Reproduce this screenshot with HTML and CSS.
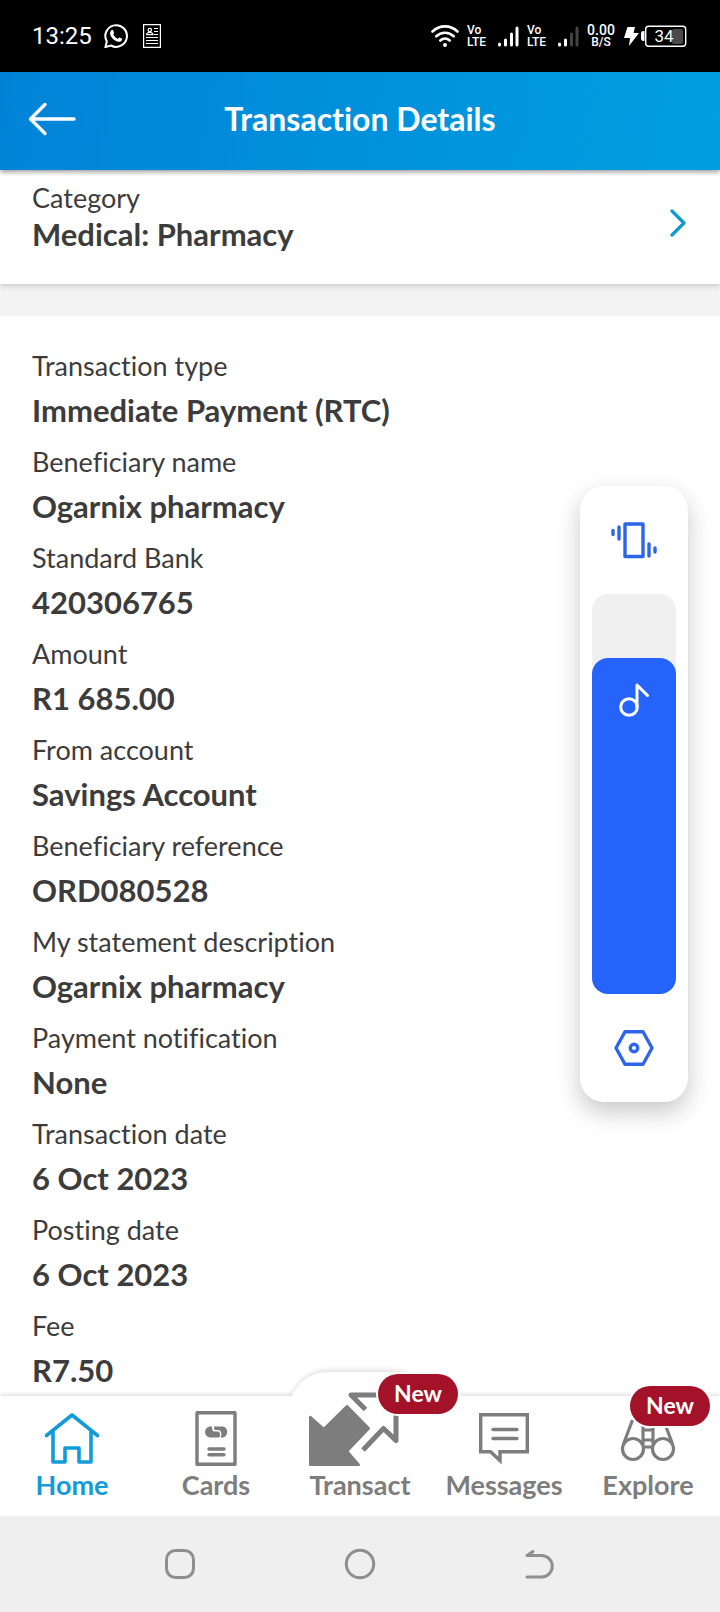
FILE: index.html
```html
<!DOCTYPE html>
<html lang="en">
<head>
<meta charset="utf-8">
<meta name="viewport" content="width=device-width, initial-scale=1">
<title>Transaction Details</title>
<link rel="stylesheet" href="styles.css">
</head>
<body>
<div class="status">
  <span class="clock">13:25</span>
  <svg width="24" height="24" viewBox="0 0 24 24" fill="none" stroke="#fff" stroke-width="2"><path d="M1.500 23l1.300-5.600A10.800 10.800 0 1 1 7 21.500Z"/><path fill="#fff" stroke="none" d="M7.200 6.400c.8-.8 1.600-.7 2 .1l.9 2.100c.2.600-.8 1.500-.8 1.900 1 2 2.400 3.300 4.400 4.200.6 0 1.300-1.500 1.900-1.300l2.200 1.100c.6.4.2 2-.8 2.700-1.600 1.100-3.600.6-6-.8-2-1.200-3.600-3.100-4.500-5C5.800 9.500 6 7.500 7.200 6.400Z"/></svg>
  <svg width="18" height="24" viewBox="0 0 18 24" fill="none" stroke="#fff" stroke-width="1.200"><path d="M.6.600h16.800v22.800H.6ZM11 4.500h4M11 7.500h4M11 10.500h4M3 13.500h12M3 16.500h12M3 19.500h12"/><circle cx="6.800" cy="6" r="1.700"/><path d="M3.600 10.700c0-3 6.400-3 6.400 0Z"/></svg>
  <div class="indicators">
    <svg width="28" height="24" viewBox="0 0 28 24" fill="none" stroke="#fff" stroke-width="2.600" stroke-linecap="round"><path d="M1.500 7.500C8.500.6 19.500.6 26.500 7.500M5.300 12.300c5-4.700 12.400-4.700 17.400 0M9.300 16.500c2.800-2.500 6.600-2.500 9.400 0"/><circle cx="14" cy="21" r="2" fill="#fff" stroke="none"/></svg>
    <span class="tiny volte"><span>Vo</span><span>LTE</span></span>
    <svg width="22" height="24" viewBox="0 0 22 24" fill="none" stroke="#fff" stroke-width="3" stroke-linecap="round"><path d="M2.500 20v1M8.500 16v5M14.500 10v11M20 4v17"/></svg>
    <span class="tiny volte"><span>Vo</span><span>LTE</span></span>
    <svg width="22" height="24" viewBox="0 0 22 24" fill="none" stroke="#fff" stroke-width="3" stroke-linecap="round"><path d="M2.500 20v1M8.500 16v5"/><path stroke="#444" d="M14.500 10v11M20 4v17"/></svg>
    <span class="tiny rate"><b>0.00</b><span>B/S</span></span>
    <svg width="64" height="24" viewBox="0 0 64 24"><path fill="#fff" d="M4.500 3h7.500l-1.500 6H16L6 22l1-8H1Z"/><path fill="#fff" d="M21.500 7v10c-3.500 0-3.500-1-3.500-5s0-5 3.500-5Z"/><rect x="49" y="5" width="11" height="15" rx="2" fill="#4a4a4a"/><rect x="22.700" y="2.200" width="40" height="20" rx="3" fill="none" stroke="#fff" stroke-width="1.400"/><text class="charge" x="41" y="18">34</text></svg>
  </div>
</div>
<header class="bar">
  <button class="back" aria-label="Back"><svg width="48" height="34" viewBox="0 0 48 34" fill="none" stroke="#fff" stroke-width="3.400" stroke-linecap="round" stroke-linejoin="round"><path d="M17 2.500 2.500 17 17 31.500M3 17h43"/></svg></button>
  <h1 class="title">Transaction Details</h1>
</header>
<button class="category">
  <span class="cat-text"><span class="cat-label">Category</span><span class="cat-value">Medical: Pharmacy</span></span>
  <svg width="18" height="30" viewBox="0 0 18 30" fill="none" stroke="#1298d5" stroke-width="3.200" stroke-linecap="round" stroke-linejoin="round"><path d="M2 3 14 15 2 27"/></svg>
</button>
<main class="content">
  <dl class="details">
    <div class="row"><dt>Transaction type</dt><dd>Immediate Payment (RTC)</dd></div>
    <div class="row"><dt>Beneficiary name</dt><dd>Ogarnix pharmacy</dd></div>
    <div class="row"><dt>Standard Bank</dt><dd>420306765</dd></div>
    <div class="row"><dt>Amount</dt><dd>R1 685.00</dd></div>
    <div class="row"><dt>From account</dt><dd>Savings Account</dd></div>
    <div class="row"><dt>Beneficiary reference</dt><dd>ORD080528</dd></div>
    <div class="row"><dt>My statement description</dt><dd>Ogarnix pharmacy</dd></div>
    <div class="row"><dt>Payment notification</dt><dd>None</dd></div>
    <div class="row"><dt>Transaction date</dt><dd>6 Oct 2023</dd></div>
    <div class="row"><dt>Posting date</dt><dd>6 Oct 2023</dd></div>
    <div class="row"><dt>Fee</dt><dd>R7.50</dd></div>
  </dl>
</main>
<nav class="tabs">
  <a class="tab active" href="#home"><svg width="96" height="74" viewBox="0 0 96 74" fill="none" stroke="currentColor" stroke-width="3.600" stroke-linecap="round" stroke-linejoin="round"><path d="M22.500 39.500 48 19l25.500 20.500M29 36v30h12V52h14v14h12V36"/></svg>Home</a>
  <a class="tab" href="#cards"><svg width="96" height="74" viewBox="0 0 96 74" fill="none" stroke="currentColor" stroke-width="3.400" stroke-linecap="round" stroke-linejoin="round"><path d="M29 16.700h38v51.600H29Z"/><path d="M41 53h15M41 58.700h15"/><path fill="currentColor" stroke="none" d="M44 30.500h-1c-8 0-8 11 0 11h8c1.500-1.500 1.500-5-.5-6H46c-1.500-.5-2-2-2-5ZM46 30.500h8c7 0 7 11 0 11h-1.500c1.500-3 1-6.500-1.500-7.500h-4c-1-.5-1-2-1-3.500Z"/></svg>Cards</a>
  <a class="tab transact" href="#transact"><svg width="96" height="74" viewBox="0 0 96 74" fill="none" stroke="currentColor" stroke-width="5" stroke-linejoin="round"><path fill="currentColor" stroke-width="2.400" d="M-1.800 21 11.700 33 35 10.200 56.800 32.400 35.200 55.200 46.800 68.800H-1.800Z"/><path d="M67-1H39L53.500 13.500M51 54l20.500-21.500L84 44.500V18"/></svg>Transact<span class="badge">New</span></a>
  <a class="tab" href="#messages"><svg width="96" height="74" viewBox="0 0 96 74" fill="none" stroke="currentColor" stroke-width="3.400" stroke-linecap="round"><path d="M24.700 18.700h46.600v37H44v8.800l-9.500-8.800h-9.800Z"/><path d="M37 33.500h24M37 42.500h24"/></svg>Messages</a>
  <a class="tab" href="#explore"><svg width="96" height="74" viewBox="0 0 96 74" fill="none" stroke="currentColor" stroke-width="3.200"><circle cx="33" cy="53" r="10.500"/><circle cx="63" cy="53" r="10.500"/><path d="M23.500 48l9-24M72.500 48l-9-24M43 49V28h10v21M43 34h10M43 44h10M44 51h8"/></svg>Explore<span class="badge">New</span></a>
</nav>
<div class="sysnav">
  <button aria-label="Recent apps"><svg width="32" height="32" viewBox="0 0 32 32" fill="none" stroke="#8f8f8f" stroke-width="3"><rect x="2.500" y="2.500" width="27" height="27" rx="9"/></svg></button>
  <button aria-label="Home screen"><svg width="32" height="32" viewBox="0 0 32 32" fill="none" stroke="#8f8f8f" stroke-width="3"><circle cx="16" cy="16" r="13.700"/></svg></button>
  <button aria-label="Go back"><svg width="32" height="32" viewBox="0 0 32 32" fill="none" stroke="#8f8f8f" stroke-width="3" stroke-linecap="round" stroke-linejoin="round"><path d="M9 3.500 3 7.500h14.500a10.700 10.700 0 0 1 0 21.500H3"/></svg></button>
</div>
<aside class="volume">
  <button aria-label="Vibrate"><svg width="48" height="40" viewBox="0 0 48 40" fill="none" stroke="#2c65e8" stroke-width="3.400" stroke-linecap="round" stroke-linejoin="round"><path d="M15 4h18v32.500H15Z"/><path d="M3 10.500v4M9 7v12M39 24v12M45 28v4"/></svg></button>
  <div class="track"><div class="level" style="height:84%"><svg width="32" height="36" viewBox="0 0 32 36" fill="none" stroke="#fff" stroke-width="3" stroke-linecap="round" stroke-linejoin="round"><circle cx="11" cy="25" r="8.300"/><path d="M19 25V3L29.500 13.500"/></svg></div><input type="range" min="0" max="100" value="84" aria-label="Media volume"></div>
  <button aria-label="Sound settings"><svg width="40" height="36" viewBox="0 0 40 36" fill="none" stroke="#2c65e8" stroke-width="3.400" stroke-linejoin="round"><path d="M11 1.700h18L38 18l-9 16.300H11L2 18Z"/><circle cx="20" cy="18" r="3.700"/></svg></button>
</aside>
</body>
</html>
```
FILE: styles.css
```css
* { box-sizing: border-box; }
body {
  margin: 0;
  min-height: 100vh;
  position: relative;
  display: flex;
  flex-direction: column;
  background: #fff;
  color: #3c3c3c;
  font-family: Lato, "Noto Sans", sans-serif;
  font-variant-ligatures: none;
}
button { border: 0; padding: 0; background: none; font: inherit; color: inherit; }
svg { display: block; flex: none; }

.status {
  height: 72px;
  padding: 0 33px 0 32px;
  display: flex;
  align-items: center;
  background: #000;
  color: #fff;
  font-family: Roboto, sans-serif;
}
.clock { font-size: 24px; margin-right: 12px; }
.status > svg { margin-right: 15px; }
.indicators { margin-left: auto; display: flex; align-items: center; gap: 8px; }
.tiny { display: flex; flex-direction: column; font-size: 12px; line-height: 12px; font-weight: 500; white-space: nowrap; }
.volte { width: 22px; }
.rate { width: 28px; align-items: center; }
.rate b { font-size: 14px; font-weight: 500; }
.charge { font-size: 17px; fill: #fff; text-anchor: middle; }

.bar {
  height: 98px;
  padding: 0 28px 4px;
  display: grid;
  grid-template-columns: 48px 1fr 48px;
  align-items: center;
  background: linear-gradient(100deg, #0083d7, #009fe1);
  box-shadow: 0 2px 5px rgba(0, 0, 0, 0.4);
  color: #fff;
  position: relative;
  z-index: 1;
}
.title { margin: 0; text-align: center; font-size: 32px; line-height: 40px; font-weight: 700; }

.category {
  height: 114px;
  padding: 0 32px 8px;
  display: flex;
  align-items: center;
  justify-content: space-between;
  text-align: left;
  background: #fff;
  box-shadow: 0 2px 6px rgba(0, 0, 0, 0.18);
}
.cat-text { padding-bottom: 14px; }
.cat-label, .cat-value { display: block; line-height: 36px; }
.cat-label { font-size: 27px; }
.cat-value { font-size: 31px; font-weight: 700; }

.content { flex: 1; padding-top: 28px; border-top: 32px solid #f3f3f3; position: relative; z-index: -1; }
.details { margin: 0; padding: 0 32px; display: grid; gap: 8px; }
.row dt { font-size: 27px; line-height: 44px; }
.row dd { margin: 0; font-size: 31px; line-height: 44px; font-weight: 700; }

.tabs {
  height: 120px;
  display: grid;
  grid-template-columns: repeat(5, 1fr);
  background: #fff;
  box-shadow: 0 -1px 5px rgba(0, 0, 0, 0.16);
}
.tab {
  position: relative;
  display: flex;
  flex-direction: column;
  align-items: center;
  color: #7d7d7d;
  font-size: 27px;
  line-height: 30px;
  font-weight: 700;
  text-decoration: none;
}
.tab svg { overflow: visible; position: relative; }
.active { color: #129bd9; }
.transact::before {
  content: "";
  position: absolute;
  top: -24px;
  left: 0;
  right: 0;
  height: 50px;
  border-radius: 40px 40px 0 0;
  background: #fff;
  box-shadow: 0 -3px 5px -1px rgba(0, 0, 0, 0.13);
  clip-path: inset(-10px -10px 26px -10px);
}
.badge {
  position: absolute;
  top: -10px;
  right: 10px;
  width: 80px;
  height: 40px;
  border-radius: 20px;
  background: #a31228;
  box-shadow: 0 0 0 2px #fff;
  color: #fff;
  font-size: 23px;
  line-height: 38px;
  text-align: center;
}
.transact .badge { top: -22px; right: -26px; z-index: 1; }

.sysnav {
  height: 96px;
  padding: 0 90px;
  display: grid;
  grid-template-columns: repeat(3, 1fr);
  place-items: center;
  background: #efefef;
}

.volume {
  position: absolute;
  top: 486px;
  right: 32px;
  width: 108px;
  padding: 0 12px;
  border-radius: 24px;
  background: #fff;
  box-shadow: 0 10px 24px rgba(0, 0, 0, 0.22);
  display: flex;
  flex-direction: column;
}
.volume button { height: 108px; display: grid; place-items: center; }
.track {
  position: relative;
  height: 400px;
  display: flex;
  align-items: flex-end;
  border-radius: 16px;
  background: #f0f0f0;
}
.level { width: 100%; padding-top: 24px; border-radius: 16px; background: #2563fb; display: flex; justify-content: center; }
.track input { position: absolute; inset: 0; width: 100%; height: 100%; margin: 0; opacity: 0; writing-mode: vertical-lr; direction: rtl; }
```
